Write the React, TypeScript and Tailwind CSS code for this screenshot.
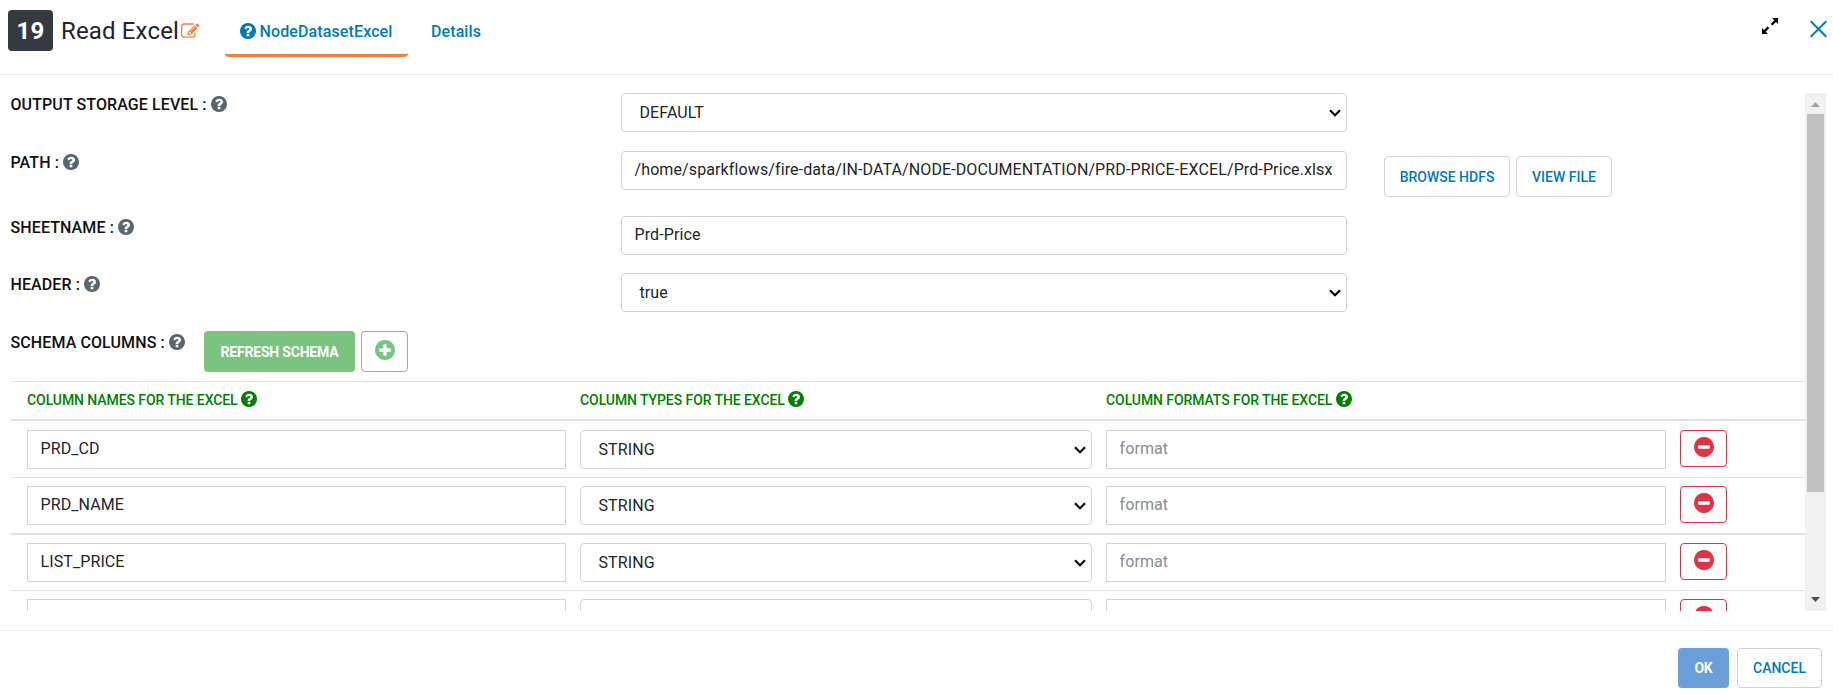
import React from "react";

function Glyph({ d, className, viewBox = "128 128 1536 1536" }: { d: string; className: string; viewBox?: string }) {
  return (
    <svg className={"shrink-0 " + className} viewBox={viewBox} fill="currentColor">
      <path d={d} />
    </svg>
  );
}

const disc =
  "M1664 896q0 209-103 385.500t-279.500 279.500-385.500 103-385.500-103-279.500-279.500-103-385.500 103-385.500 279.500-279.500 385.500-103 385.500 103 279.500 279.500 103 385.500z";
const questionPath =
  "M1024 1376v-192q0-14-9-23t-23-9h-192q-14 0-23 9t-9 23v192q0 14 9 23t23 9h192q14 0 23-9t9-23zm256-672q0-88-55.500-163t-138.500-116-170-41q-243 0-371 213-15 24 8 42l132 100q7 6 19 6 16 0 25-12 53-68 86-92 34-24 86-24 48 0 85.500 26t37.500 59q0 38-20 61t-68 45q-63 28-115.500 86.500t-52.500 125.500v36q0 14 9 23t23 9h192q14 0 23-9t9-23q0-19 21.500-49.500t54.500-49.500q32-18 49-28.500t46-35 44.500-48 28-60.500 12.500-81z" +
  disc;
const minusPath =
  "M1344 960v-128q0-26-19-45t-45-19h-768q-26 0-45 19t-19 45v128q0 26 19 45t45 19h768q26 0 45-19t19-45z" + disc;
const plusPath =
  "M1344 960v-128q0-26-19-45t-45-19h-256v-256q0-26-19-45t-45-19h-128q-26 0-45 19t-19 45v256h-256q-26 0-45 19t-19 45v128q0 26 19 45t45 19h256v256q0 26 19 45t45 19h128q26 0 45-19t19-45v-256h256q26 0 45-19t19-45z" +
  disc;
const editPath =
  "M888 1184l116-116-152-152-116 116v56h96v96h56zm440-720q-16-16-33 1l-350 350q-17 17-1 33t33-1l350-350q17-17 1-33zm80 594v190q0 119-84.500 203.500t-203.500 84.500h-832q-119 0-203.500-84.500t-84.500-203.500v-832q0-119 84.500-203.500t203.500-84.500h832q63 0 117 25 15 7 18 23 3 17-9 29l-49 49q-14 14-32 8-23-6-45-6h-832q-66 0-113 47t-47 113v832q0 66 47 113t113 47h832q66 0 113-47t47-113v-126q0-13 9-22l64-64q15-15 35-7t20 29zm-96-738l288 288-672 672h-288v-288zm444 132l-92 92-288-288 92-92q28-28 68-28t68 28l152 152q28 28 28 68t-28 68z";

function Chevron() {
  return (
    <svg width="12" height="8" viewBox="0 0 12 8" fill="none" stroke="#000" strokeWidth="2.2">
      <path d="M1 1.2 L6 6.2 L11 1.2" />
    </svg>
  );
}

function Select({ value, className = "" }: { value: string; className?: string }) {
  return (
    <div className={"flex h-[39px] items-center justify-between rounded border border-[#ced4da] bg-white pl-[17.5px] pr-[5px] text-base tracking-[0.1px] text-[#212529] " + className}>
      <span>{value}</span>
      <Chevron />
    </div>
  );
}

function Label({ text }: { text: string }) {
  return (
    <div className="flex h-[23px] items-center gap-1 text-base font-medium text-[#111]">
      <span className="-ml-[0.5px] tracking-[0.1px]">{text} :</span>
      <Glyph d={questionPath} className="mb-px size-4 text-[#5a6570]" />
    </div>
  );
}

function Field({ label, height, children }: { label: string; height: string; children: React.ReactNode }) {
  return (
    <div className={"flex items-start " + height}>
      <div className="w-[610px] shrink-0">
        <Label text={label} />
      </div>
      {children}
    </div>
  );
}

const textInput =
  "flex h-[39px] w-[726px] items-center rounded border border-[#ced4da] px-[12.5px] pb-0.5 tracking-[0.11px] whitespace-nowrap";
const outlineButton =
  "flex items-center justify-center rounded border border-[#ced4da] bg-white text-sm font-medium text-[#007bb8]";

function HeadCell({ text }: { text: string }) {
  return (
    <div className="flex items-center gap-[3.5px] pb-0.5 text-sm font-medium text-[#008000]">
      <span className="tracking-[-0.08px]">{text}</span>
      <Glyph d={questionPath} className="mb-0.5 size-4" />
    </div>
  );
}

function Row({ name, type, format, className }: { name: string; type: string; format: string; className: string }) {
  return (
    <div className={"grid grid-cols-[539px_512px_560px_47px] items-start gap-x-3.5 pl-4 " + className}>
      <div className="flex h-[39px] items-center border border-[#ced4da] px-[12.5px] pb-0.5 text-base tracking-[0.1px] text-[#212529]">{name}</div>
      <Select value={type} />
      <div className="flex h-[39px] items-center border border-[#ced4da] px-[12.5px] pb-0.5 text-base tracking-[0.1px] text-[#868e96]">{format}</div>
      <div className="flex h-[37px] items-center justify-center rounded border border-[#dc3545] pb-[4px] text-[#dc3545]">
        <Glyph d={minusPath} className="size-5" />
      </div>
    </div>
  );
}

export default function App() {
  return (
    <div className="flex h-[695px] w-[1833px] flex-col overflow-hidden bg-white font-['Roboto',sans-serif] text-[#212529]">
      <header className="flex h-[75px] shrink-0 items-start border-b border-[#e9ecef] pl-2">
        <div className="mt-2.5 flex h-[41px] w-[45px] items-center justify-center rounded bg-[#343a40] text-2xl font-bold tracking-[0.2px] text-white">19</div>
        <div className="ml-2 mt-[15px] flex h-8 items-center text-2xl">
          <span className="w-[120px] whitespace-nowrap tracking-[0.15px]">Read Excel</span>
          <Glyph d={editPath} viewBox="0 0 1792 1792" className="mt-px size-[18.5px] text-[#f0803c]" />
        </div>
        <div className="ml-[25.5px] flex h-[57px] w-[183px] items-center justify-center gap-[3px] rounded-sm border-b-[3px] border-[#f0803c] pt-[9px] font-medium text-[#007bb8]">
          <Glyph d={questionPath} className="mb-0.5 size-4" />
          <span className="tracking-[0.12px]">NodeDatasetExcel</span>
        </div>
        <div className="ml-[23px] flex h-[57px] items-center pt-[6px] font-medium tracking-[0.1px] text-[#007bb8]">Details</div>
        <div className="ml-auto flex items-start">
          <svg className="mt-[17.5px]" width="16" height="16" viewBox="0 0 16 16" fill="#000">
            <path d="M10 0h6v6l-2-2-3.600 3.600-1.700-1.700L12.300 2.300z" />
            <path d="M6 16H0v-6l2 2 3.600-3.600 1.700 1.700L3.700 13.700z" />
          </svg>
          <svg className="ml-8 mr-1.5 mt-5" width="17" height="18" viewBox="0 0 17 18" fill="none" stroke="#007bb8" strokeWidth="2">
            <path d="M.7 1.2 16.3 16.8M16.3 1.2.7 16.8" />
          </svg>
        </div>
      </header>

      <main className="mt-[18px] flex h-[518px] shrink-0 overflow-hidden pl-[11px]">
        <div className="w-[1794px] shrink-0">
          <Field label="OUTPUT STORAGE LEVEL" height="h-[58px]">
            <Select value="DEFAULT" className="w-[726px]" />
          </Field>
          <Field label="PATH" height="h-[65px]">
            <div className={textInput}>
              <span>/home/sparkflows/fire-data/IN-DATA/NODE-DOCUMENTATION/PRD-PRICE-EXCEL/Prd-Price.xlsx</span>
            </div>
            <div className="ml-[37px] mt-[5px] flex gap-1.5">
              <div className={outlineButton + " h-[41px] w-[126px]"}>BROWSE HDFS</div>
              <div className={outlineButton + " h-[41px] w-[96px]"}>VIEW FILE</div>
            </div>
          </Field>
          <Field label="SHEETNAME" height="h-[57px]">
            <div className={textInput}>Prd-Price</div>
          </Field>
          <Field label="HEADER" height="h-[58px]">
            <Select value="true" className="w-[726px]" />
          </Field>
          <div className="flex h-[50px] items-start">
            <div className="w-[193px]">
              <Label text="SCHEMA COLUMNS" />
            </div>
            <div className="flex h-[41px] w-[151px] items-center justify-center rounded bg-[#7ac381] text-sm font-bold tracking-[-0.2px] text-white">REFRESH SCHEMA</div>
            <div className="ml-1.5 flex h-[41px] w-[47px] items-center justify-center rounded border border-[#7ac381] pb-[3px] text-[#7ac381]">
              <Glyph d={plusPath} className="size-5" />
            </div>
          </div>
          <div className="grid h-10 grid-cols-[539px_512px_560px_47px] gap-x-3.5 border-b-2 border-t border-[#dee2e6] pl-4">
            <HeadCell text="COLUMN NAMES FOR THE EXCEL" />
            <HeadCell text="COLUMN TYPES FOR THE EXCEL" />
            <HeadCell text="COLUMN FORMATS FOR THE EXCEL" />
          </div>
          <Row name="PRD_CD" type="STRING" format="format" className="h-[57px] border-b border-[#dee2e6] pt-[9px]" />
          <Row name="PRD_NAME" type="STRING" format="format" className="h-[57px] border-b-2 border-[#dee2e6] pt-2" />
          <Row name="LIST_PRICE" type="STRING" format="format" className="h-14 border-b border-[#dee2e6] pt-2" />
          <Row name="" type="" format="" className="h-[57px] pt-2" />
        </div>
        <div className="flex w-[21px] shrink-0 flex-col items-center bg-[#f1f1f1]">
          <div className="flex h-[21px] items-center pt-0.5">
            <svg width="9" height="5" viewBox="0 0 9 5" fill="#a3a3a3"><path d="M4.5 0 9 5H0z" /></svg>
          </div>
          <div className="h-[378px] w-[17px] bg-[#c1c1c1]" />
          <div className="mt-auto flex h-[21px] items-center pb-0.5">
            <svg width="9" height="5" viewBox="0 0 9 5" fill="#505050"><path d="M0 0h9L4.5 5z" /></svg>
          </div>
        </div>
      </main>

      <footer className="mt-[19px] flex h-[65px] shrink-0 items-start justify-end gap-2 border-t border-[#e9ecef] pr-[11px] pt-[17px]">
        <div className="flex h-10 w-[51px] items-center justify-center rounded bg-[#6a9fd9] text-sm font-bold tracking-[-0.2px] text-white">OK</div>
        <div className={outlineButton + " h-10 w-[85px]"}>CANCEL</div>
      </footer>
    </div>
  );
}
